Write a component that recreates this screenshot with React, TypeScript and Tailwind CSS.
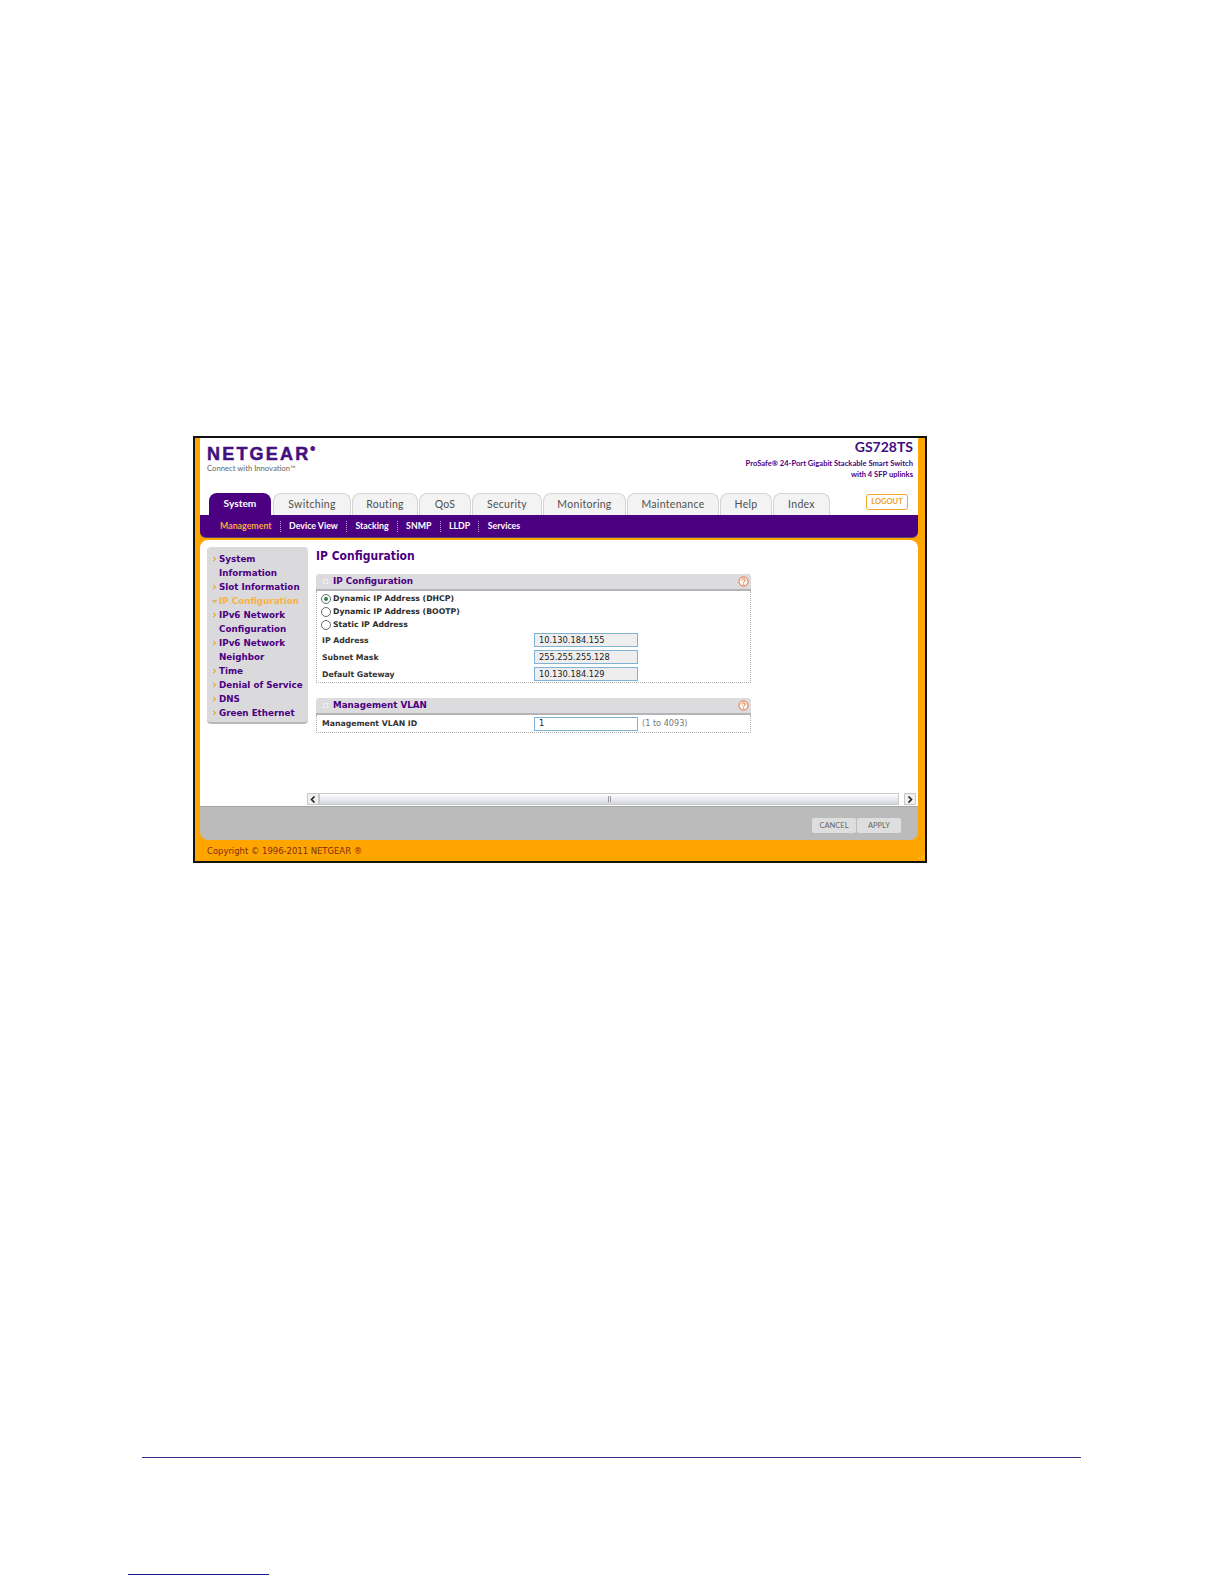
const tabs = [
  { label: "Switching", w: "w-[78px]" },
  { label: "Routing", w: "w-[66px]" },
  { label: "QoS", w: "w-[52px]" },
  { label: "Security", w: "w-[70px]" },
  { label: "Monitoring", w: "w-[83px]" },
  { label: "Maintenance", w: "w-[92px]" },
  { label: "Help", w: "w-[52px]" },
  { label: "Index", w: "w-[57px]" },
]

const subnav = ["Device View", "Stacking", "SNMP", "LLDP", "Services"]

const sideItems = [
  { lines: ["System", "Information"] },
  { lines: ["Slot Information"] },
  { lines: ["IP Configuration"], active: true },
  { lines: ["IPv6 Network", "Configuration"] },
  { lines: ["IPv6 Network", "Neighbor"] },
  { lines: ["Time"] },
  { lines: ["Denial of Service"] },
  { lines: ["DNS"] },
  { lines: ["Green Ethernet"] },
]

const purple = "text-[#4b0082]"
const verdana = "font-['DejaVu_Sans',sans-serif]"
const gothic = "font-['Lato',sans-serif]"

function HelpIcon() {
  return (
    <svg width="11" height="11" viewBox="0 0 11 11" className="shrink-0">
      <circle cx="5.5" cy="5.5" r="4.6" fill="#fdf3ea" stroke="#e0703a" strokeWidth="1" />
      <path d="M4 4.3c0-2 3.2-2 3.1 0 0 1.1-1.5 1.1-1.5 2.2" fill="none" stroke="#d9602a" strokeWidth="0.9" />
      <circle cx="5.6" cy="8.1" r="0.6" fill="#d9602a" />
    </svg>
  )
}

function SectionHead({ title }: { title: string }) {
  return (
    <div className="flex h-[17px] items-center rounded-t-[3px] border-b-2 border-[#b4b3b5] bg-[#dcdbdd] pl-[6px] pr-[2px]">
      <span className={`w-[11px] text-[9px] font-bold leading-none text-[#f6f6f6] ${verdana}`}>::</span>
      <span className={`flex-1 text-[8.75px] font-bold ${purple} ${verdana}`}>{title}</span>
      <HelpIcon />
    </div>
  )
}

function Radio({ label, checked }: { label: string; checked?: boolean }) {
  return (
    <div className="flex h-[13px] items-center pl-[4px]">
      <span className="flex h-[10px] w-[10px] items-center justify-center rounded-full border border-[#5f6d68] bg-white">
        {checked && <span className="h-[4px] w-[4px] rounded-full bg-[#2f7d4f]" />}
      </span>
      <span className={`ml-[2px] text-[7.75px] font-bold text-[#2c2c2c] ${verdana}`}>{label}</span>
    </div>
  )
}

function Field({ label, value, white }: { label: string; value: string; white?: boolean }) {
  return (
    <div className="flex h-[14px] items-center">
      <span className={`w-[217px] pl-[5px] pt-[1px] text-[7.75px] font-bold text-[#333333] ${verdana}`}>{label}</span>
      <span
        className={`flex h-[14px] w-[104px] items-center border border-[#7fb3d5] pl-[4px] text-[8.25px] text-[#222222] ${verdana} ${white ? "bg-white" : "bg-[#eeeeee]"}`}
      >
        {value}
      </span>
    </div>
  )
}

export default function App() {
  return (
    <div className="flex h-[1584px] w-[1224px] flex-col overflow-hidden bg-white">
      <div className="relative ml-[193px] mt-[436px] flex h-[427px] w-[734px] flex-col border-2 border-[#111111] bg-[#ffa500]">
        {/* header */}
        <div className="ml-[5px] mr-[7px] flex h-[77px] shrink-0 flex-col bg-white pl-[9px] pr-[5px]">
          <div className="flex h-[55px] justify-between">
            <div className="-ml-[2px] pt-[7px]">
              <div className="flex h-[18px] items-start text-[18px] font-black leading-[18px] tracking-[2.2px] text-[#43107f] [-webkit-text-stroke:0.5px_#43107f] font-['Liberation_Sans',sans-serif]">
                NETGEAR<span className="text-[6px] leading-[8px] tracking-normal">®</span>
              </div>
              <div className={`text-[7.7px] leading-[11px] text-[#666666] ${gothic}`}>Connect with Innovation™</div>
            </div>
            <div className={`flex flex-col items-end text-right ${gothic}`}>
              <div className="text-[14px] font-bold leading-[18px] text-[#43107f]">GS728TS</div>
              <div className="mt-[2px] text-[7.6px] font-bold leading-[11px] text-[#4b0082]">
                ProSafe® 24-Port Gigabit Stackable Smart Switch
                <br />
                with 4 SFP uplinks
              </div>
            </div>
          </div>
          <div className="flex h-[22px] items-end">
            <div className={`flex h-[22px] w-[62px] items-center justify-center rounded-t-[8px] bg-[#4b0082] text-[10.2px] font-bold text-white ${gothic}`}>
              System
            </div>
            <div className="ml-[2px] flex">
              {tabs.map((t) => (
                <div
                  key={t.label}
                  className={`mr-[1px] flex h-[22px] ${t.w} items-center justify-center rounded-t-[8px] border border-b-0 border-[#d5d5d5] bg-[#f3f3f3] text-[10.5px] tracking-[0.3px] text-[#505050] ${gothic}`}
                >
                  {t.label}
                </div>
              ))}
            </div>
            <div className={`mb-[5px] ml-auto mr-[5px] flex h-[16px] w-[42px] items-center justify-center rounded-[3px] border border-[#f0a830] text-[7.5px] font-bold text-[#f0a020] ${gothic}`}>
              LOGOUT
            </div>
          </div>
        </div>

        {/* sub navigation */}
        <div className={`ml-[5px] mr-[7px] flex h-[23px] shrink-0 items-center rounded-b-[6px] border-b border-[#5a4a70] bg-[#4b0082] pl-[20px] text-[8.8px] font-bold text-white ${gothic}`}>
          <span className="text-[#f5a742]">Management</span>
          {subnav.map((s) => (
            <span key={s} className="flex items-center">
              <span className="mx-[8.25px] h-[11px] border-l border-dotted border-[#b9a2d6]" />
              {s}
            </span>
          ))}
        </div>

        {/* content */}
        <div className="ml-[5px] mr-[7px] mt-[2px] flex h-[266px] shrink-0 flex-col rounded-t-[8px] bg-white">
          <div className="flex h-[253px] pt-[7px]">
            <div className={`ml-[7px] h-[177px] w-[101px] rounded-[4px] border-b-2 border-[#b9b8ba] bg-[#dad9db] pl-[5px] pt-[4.5px] text-[8.75px] font-bold leading-[14px] ${purple} ${verdana}`}>
              {sideItems.map((item) => (
                <div key={item.lines.join(" ")} className={`flex ${item.active ? "text-[#f7b244]" : ""}`}>
                  <span className="flex h-[14px] w-[7px] shrink-0 items-center">
                    <svg width="5" height="6" viewBox="0 0 5 6">
                      <path d={item.active ? "M0.5 2 2.5 4 4.5 2" : "M1.2 0.8 3.4 3 1.2 5.2"} fill="none" stroke="#eba526" strokeWidth="1.1" />
                    </svg>
                  </span>
                  <span>
                    {item.lines.map((l) => (
                      <div key={l}>{l}</div>
                    ))}
                  </span>
                </div>
              ))}
            </div>
            <div className="ml-[8px] w-[435px]">
              <div className={`h-[18px] text-[12px] font-bold leading-[19px] ${purple} font-['DejaVu_Sans_Condensed','DejaVu_Sans',sans-serif]`}>IP Configuration</div>
              <div className="mt-[9px]">
                <SectionHead title="IP Configuration" />
                <div className="flex h-[92px] flex-col border-x border-b border-dotted border-[#b0b0b0] pt-[1px]">
                  <Radio label="Dynamic IP Address (DHCP)" checked />
                  <Radio label="Dynamic IP Address (BOOTP)" />
                  <Radio label="Static IP Address" />
                  <div className="mt-[2px] flex flex-col gap-[3px]">
                    <Field label="IP Address" value="10.130.184.155" />
                    <Field label="Subnet Mask" value="255.255.255.128" />
                    <Field label="Default Gateway" value="10.130.184.129" />
                  </div>
                </div>
              </div>
              <div className="mt-[15px]">
                <SectionHead title="Management VLAN" />
                <div className="flex h-[18px] items-center border-x border-b border-dotted border-[#b0b0b0]">
                  <Field label="Management VLAN ID" value="1" white />
                  <span className={`ml-[4px] text-[8.15px] text-[#777777] ${verdana}`}>(1 to 4093)</span>
                </div>
              </div>
            </div>
          </div>
          {/* horizontal scrollbar */}
          <div className="ml-[107px] flex h-[12px] w-[609px] items-stretch">
            <div className="flex w-[12px] items-center justify-center border border-[#c9c9c9] bg-[#f0f0f0]">
              <svg width="6" height="7" viewBox="0 0 6 7"><path d="M4.5 0.5 1.5 3.5 4.5 6.5" fill="none" stroke="#222222" strokeWidth="1.6" /></svg>
            </div>
            <div className="flex w-[580px] items-center justify-center border border-[#c9c9c9] bg-gradient-to-b from-white to-[#d3d6e0]">
              <span className="h-[6px] w-[3px] border-x border-[#9a9a9a]" />
            </div>
            <div className="ml-[5px] flex w-[12px] items-center justify-center border border-[#c9c9c9] bg-[#f0f0f0]">
              <svg width="6" height="7" viewBox="0 0 6 7"><path d="M1.5 0.5 4.5 3.5 1.5 6.5" fill="none" stroke="#222222" strokeWidth="1.6" /></svg>
            </div>
          </div>
        </div>

        {/* button bar */}
        <div className="ml-[5px] mr-[7px] flex h-[34px] shrink-0 items-start justify-end rounded-b-[8px] border-t border-[#a5a5a5] bg-[#bcbbbb] pr-[17px] pt-[11px]">
          <div className={`flex h-[15px] w-[44px] items-center justify-center rounded-[2px] bg-[#dedede] text-[7.5px] text-[#666666] ${gothic}`}>CANCEL</div>
          <div className={`ml-[1px] flex h-[15px] w-[44px] items-center justify-center rounded-[2px] bg-[#dedede] text-[7.5px] text-[#666666] ${gothic}`}>APPLY</div>
        </div>

        <div className={`flex flex-1 items-center pl-[12px] pt-[1px] text-[8.45px] text-[#7f2b12] ${verdana}`}>Copyright © 1996-2011 NETGEAR ®</div>

        {/* resize grip */}
        <svg width="8" height="8" viewBox="0 0 8 8" className="absolute bottom-0 right-0">
          <path d="M6 1h1v1H6zM4 3h1v1H4zM6 3h1v1H6zM2 5h1v1H2zM4 5h1v1H4zM6 5h1v1H6z" fill="#f5dfa8" />
        </svg>
      </div>

      <div className="ml-[142px] mt-[594px] h-px w-[939px] bg-[#3b2c8c]" />
      <div className="ml-[128px] mt-[116px] h-px w-[141px] bg-[#1c1c8c]" />
    </div>
  )
}
